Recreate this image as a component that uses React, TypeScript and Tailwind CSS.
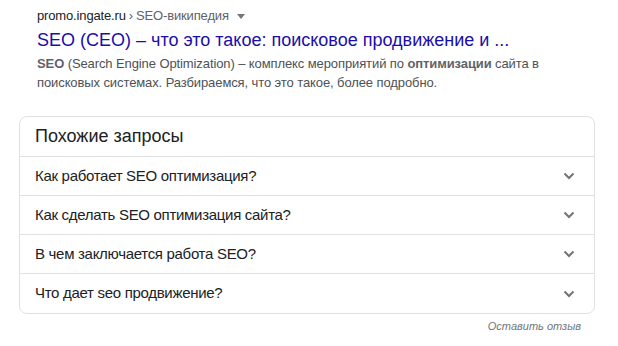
import React from "react";

const rows = [
  "Как работает SEO оптимизация?",
  "Как сделать SEO оптимизация сайта?",
  "В чем заключается работа SEO?",
  "Что дает seo продвижение?",
];

function Chevron() {
  return (
    <svg width="12" height="8" viewBox="0 0 12 8" className="shrink-0">
      <path d="M1.5 1.5 L6 6 L10.5 1.5" fill="none" stroke="#70757a" strokeWidth="2" />
    </svg>
  );
}

export default function App() {
  return (
    <div
      className="w-[618px] h-[346px] bg-white relative overflow-hidden"
      style={{ fontFamily: '"Liberation Sans", Arial, sans-serif' }}
    >
      <div className="pl-[37px] pt-[7px]">
        <div className="flex items-center text-[13px] leading-[18px] tracking-[-0.15px] text-[#202124]">
          <span>promo.ingate.ru</span>
          <span className="text-[#5f6368] mx-[3px]">›</span>
          <span className="text-[#5f6368]">SEO-википедия</span>
          <svg width="8" height="5" viewBox="0 0 8 5" className="ml-[8px]">
            <path d="M0 0 L8 0 L4 5 Z" fill="#70757a" />
          </svg>
        </div>
        <div className="text-[18px] leading-[24px] text-[#1a0dab] mt-[3px]">
          SEO (СЕО) – что это такое: поисковое продвижение и ...
        </div>
        <div className="text-[13px] leading-[19px] tracking-[-0.1px] text-[#4d5156] mt-[2px] w-[520px]">
          <b className="text-[#5f6368]">SEO</b> (Search Engine Optimization) – комплекс мероприятий по{" "}
          <b className="text-[#5f6368]">оптимизации</b> сайта в поисковых системах. Разбираемся, что это такое, более подробно.
        </div>
      </div>
      <div className="ml-[19px] mt-[24px] w-[576px] border border-[#dfe1e5] rounded-[8px]">
        <div className="h-[40px] flex items-center pl-[15px] text-[18px] text-[#202124] border-b border-[#dfe1e5]">
          Похожие запросы
        </div>
        {rows.map((r, i) => (
          <div
            key={i}
            className={`h-[39px] flex items-center justify-between pl-[15px] pr-[19px] text-[15px] tracking-[-0.3px] text-[#202124] ${
              i < rows.length - 1 ? "border-b border-[#dfe1e5]" : ""
            }`}
          >
            <span>{r}</span>
            <Chevron />
          </div>
        ))}
      </div>
      <div className="w-[581px] text-right italic text-[11px] text-[#70757a] mt-[4px]">Оставить отзыв</div>
    </div>
  );
}
